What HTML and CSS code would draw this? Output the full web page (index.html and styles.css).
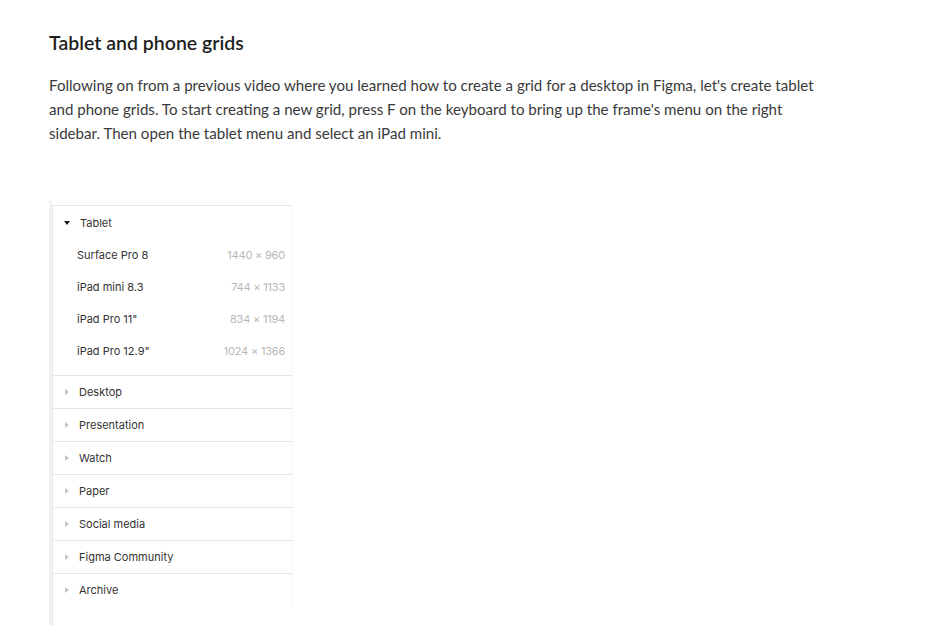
FILE: index.html
```html
<!DOCTYPE html>
<html>
<head>
<meta charset="utf-8">
<link rel="stylesheet" href="styles.css">
</head>
<body>
<main class="article">
  <h2 class="title">Tablet and phone grids</h2>
  <p class="text">Following on from a previous video where you learned how to create a grid for a desktop in Figma, let's create tablet and phone grids. To start creating a new grid, press F on the keyboard to bring up the frame's menu on the right sidebar. Then open the tablet menu and select an iPad mini.</p>
  <div class="shot">
    <div class="panel">
      <div class="group open">
        <div class="ghead"><span class="tri down"></span><span class="glabel">Tablet</span></div>
        <div class="item"><span class="iname">Surface Pro 8</span><span class="isize">1440 × 960</span></div>
        <div class="item"><span class="iname">iPad mini 8.3</span><span class="isize">744 × 1133</span></div>
        <div class="item"><span class="iname">iPad Pro 11"</span><span class="isize">834 × 1194</span></div>
        <div class="item"><span class="iname">iPad Pro 12.9"</span><span class="isize">1024 × 1366</span></div>
      </div>
      <div class="group"><div class="ghead"><span class="tri"></span><span class="glabel">Desktop</span></div></div>
      <div class="group"><div class="ghead"><span class="tri"></span><span class="glabel">Presentation</span></div></div>
      <div class="group"><div class="ghead"><span class="tri"></span><span class="glabel">Watch</span></div></div>
      <div class="group"><div class="ghead"><span class="tri"></span><span class="glabel">Paper</span></div></div>
      <div class="group"><div class="ghead"><span class="tri"></span><span class="glabel">Social media</span></div></div>
      <div class="group"><div class="ghead"><span class="tri"></span><span class="glabel">Figma Community</span></div></div>
      <div class="group last"><div class="ghead"><span class="tri"></span><span class="glabel">Archive</span></div></div>
    </div>
  </div>
</main>
</body>
</html>
```
FILE: styles.css
```css
html, body {
  margin: 0;
  padding: 0;
  background: #ffffff;
}
.article {
  padding: 30px 0 0 49px;
  font-family: Lato, "Open Sans", sans-serif;
  color: #2d2d2d;
}
.title {
  margin: 0;
  font-size: 19.5px;
  line-height: 26px;
  font-weight: 600;
  color: #1f1f1f;
}
.text {
  margin: 17px 0 0 0;
  width: 780px;
  font-size: 15.1px;
  line-height: 24px;
  color: #3a3a3a;
}
.shot {
  margin-top: 55px;
  width: 244px;
  height: 425px;
  display: flex;
  box-sizing: border-box;
  border-left: 3px solid #f2f2f2;
}
.panel {
  flex: 1;
  margin-top: 5px;
  border-left: 1px solid #e6e6e6;
  font-family: Inter, "Liberation Sans", sans-serif;
  font-size: 11px;
  color: #333333;
}
.group {
  border-top: 1px solid #e5e5e5;
  border-right: 1px solid #f7f7f7;
}
.group.open {
  padding-top: 1px;
  padding-bottom: 8px;
}
.ghead {
  height: 32px;
  display: flex;
  align-items: center;
  padding-left: 11px;
}
.tri {
  width: 0;
  height: 0;
  border-top: 3px solid transparent;
  border-bottom: 3px solid transparent;
  border-left: 4px solid #c4c4c4;
  margin-right: 10px;
  margin-left: 1px;
}
.tri.down {
  border-left: 3px solid transparent;
  border-right: 3px solid transparent;
  border-top: 4px solid #1a1a1a;
  border-bottom: none;
  margin-left: 0;
  margin-right: 10px;
}
.glabel {
  color: #333333;
}
.item {
  height: 32px;
  display: flex;
  align-items: center;
  justify-content: space-between;
  padding: 0 7px 0 24px;
}
.isize {
  color: #b8b8b8;
  letter-spacing: -0.2px;
}
```
